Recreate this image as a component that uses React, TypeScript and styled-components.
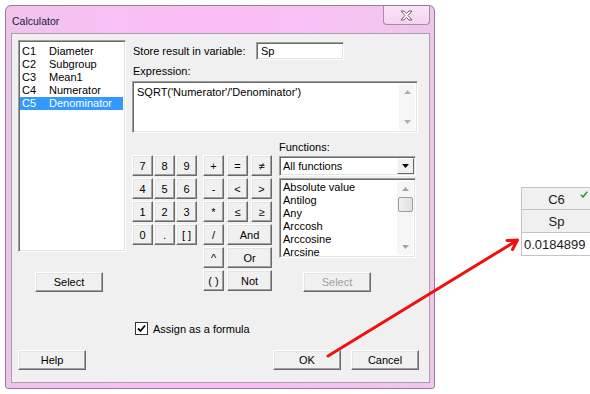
import * as React from 'react';
import styled, { createGlobalStyle } from 'styled-components';

const GlobalStyle = createGlobalStyle`
  html, body {
    margin: 0;
    padding: 0;
    background: #ffffff;
  }
  body {
    width: 590px;
    height: 394px;
    overflow: hidden;
    font-family: "Liberation Sans", Arial, sans-serif;
    font-size: 11px;
    color: #000000;
  }
`;

const Page = styled.div`
  position: relative;
  width: 590px;
  height: 394px;
  display: flex;
  align-items: flex-start;
  overflow: hidden;
`;

const Window = styled.div`
  flex-shrink: 0;
  margin: 5px 0 0 5px;
  width: 430px;
  height: 384px;
  box-sizing: border-box;
  border: 1px solid #8f8090;
  border-radius: 6px 6px 3px 3px;
  background: linear-gradient(90deg, #efc3ec 0%, #f8c0f3 25%, #fbbcf6 50%, #f6c2f2 75%, #efc6ec 100%);
  display: flex;
  flex-direction: column;
  padding: 0 4px 5px 5px;
`;

const TitleBar = styled.div`
  height: 27px;
  display: flex;
  justify-content: space-between;
  align-items: flex-start;
`;

const Title = styled.span`
  margin: 9px 0 0 1px;
  font-size: 10.5px;
  color: #1c1c3c;
`;

const CloseBtn = styled.div`
  width: 47px;
  height: 19px;
  box-sizing: border-box;
  border: 1px solid #a28fa1;
  border-top: none;
  border-radius: 0 0 4px 4px;
  background: linear-gradient(#fbe4f8, #f5d2f1);
  display: flex;
  align-items: center;
  justify-content: center;
`;

const Client = styled.div`
  flex: 1;
  box-sizing: border-box;
  border: 1px solid #a8a0a8;
  background: #f0f0f0;
  padding: 6px 0 0 6px;
  display: flex;
  flex-direction: column;
`;

const TopArea = styled.div`
  display: flex;
`;

const LeftCol = styled.div`
  width: 108px;
  display: flex;
  flex-direction: column;
`;

const Sunken = styled.div`
  box-sizing: border-box;
  background: #ffffff;
  border: 1px solid;
  border-color: #a0a0a0 #ffffff #ffffff #a0a0a0;
  box-shadow: inset 1px 1px 0 #696969, inset -1px -1px 0 #e3e3e3;
`;

const ColumnList = styled(Sunken)`
  height: 212px;
  padding: 4px 2px 0 1px;
`;

const ColumnItem = styled.div<{ $selected?: boolean }>`
  display: grid;
  grid-template-columns: 27px 1fr;
  height: 13px;
  line-height: 13px;
  padding-left: 2px;
  background: ${(p) => (p.$selected ? '#3399ff' : 'transparent')};
  color: ${(p) => (p.$selected ? '#ffffff' : '#000000')};
`;

const Button = styled.button<{ $w?: number; $disabled?: boolean }>`
  width: ${(p) => p.$w ?? 21}px;
  height: 21px;
  box-sizing: border-box;
  padding: 0;
  margin: 0;
  background: #f0f0f0;
  border: 1px solid;
  border-color: #ffffff #696969 #696969 #ffffff;
  box-shadow: inset -1px -1px 0 #a0a0a0, inset 1px 1px 0 #e3e3e3;
  font-family: "Liberation Sans", Arial, sans-serif;
  font-size: 11px;
  color: ${(p) => (p.$disabled ? '#a0a0a0' : '#000000')};
  display: flex;
  align-items: center;
  justify-content: center;
`;

const PushButton = styled(Button)`
  height: 20px;
`;

const LeftSelect = styled(PushButton)`
  margin: 20px 0 0 17px;
`;

const RightCol = styled.div`
  margin-left: 6px;
  width: 286px;
  display: flex;
  flex-direction: column;
`;

const StoreRow = styled.div`
  margin-top: 2px;
  height: 18px;
  display: flex;
  align-items: center;
`;

const Label = styled.span`
  display: block;
  height: 13px;
  line-height: 13px;
  white-space: nowrap;
`;

const StoreLabel = styled(Label)`
  width: 123px;
  margin-left: 1px;
`;

const VarInput = styled(Sunken)`
  width: 88px;
  height: 18px;
  padding: 2px 0 0 4px;
  line-height: 13px;
`;

const ExprLabel = styled(Label)`
  margin: 5px 0 0 1px;
`;

const ExprBox = styled(Sunken)`
  margin-top: 3px;
  height: 52px;
  display: flex;
  justify-content: space-between;
  padding: 2px 2px 2px 4px;
`;

const ExprText = styled.span`
  margin-top: 2px;
  line-height: 13px;
`;

const ScrollBar = styled.div`
  width: 16px;
  background: #f6f6f6;
  display: flex;
  flex-direction: column;
  justify-content: space-between;
  align-items: center;
`;

const ArrowBox = styled.div`
  width: 16px;
  height: 16px;
  display: flex;
  align-items: center;
  justify-content: center;
`;

const Thumb = styled.div`
  margin-top: -28px;
  width: 15px;
  height: 15px;
  box-sizing: border-box;
  background: linear-gradient(90deg, #f2f2f2, #e0e0e0);
  border: 1px solid #9c9c9c;
  border-radius: 2px;
`;

const LowerArea = styled.div`
  margin-top: 8px;
  display: flex;
`;

const Keypad = styled.div`
  margin-top: 14px;
  width: 140px;
  display: flex;
  align-items: flex-start;
`;

const DigitGrid = styled.div`
  display: grid;
  grid-template-columns: repeat(3, 21px);
  grid-auto-rows: 21px;
  column-gap: 1px;
  row-gap: 2px;
`;

const OpGrid = styled.div`
  margin-left: 6px;
  display: grid;
  grid-template-columns: repeat(3, 21px);
  grid-auto-rows: 21px;
  column-gap: 3px;
  row-gap: 2px;
`;

const WideKey = styled(Button)`
  grid-column: span 2;
  width: 45px;
`;

const FunctionsCol = styled.div`
  margin-left: 7px;
  width: 137px;
  display: flex;
  flex-direction: column;
`;

const Combo = styled(Sunken)`
  margin-top: 2px;
  height: 20px;
  display: flex;
  align-items: center;
  justify-content: space-between;
  padding: 0 1px 0 3px;
`;

const ComboButton = styled.div`
  width: 17px;
  height: 16px;
  box-sizing: border-box;
  background: #f0f0f0;
  border: 1px solid;
  border-color: #ffffff #696969 #696969 #ffffff;
  display: flex;
  align-items: center;
  justify-content: center;
`;

const FuncList = styled(Sunken)`
  margin-top: 2px;
  height: 80px;
  display: flex;
  justify-content: space-between;
  padding: 2px 2px 2px 3px;
`;

const FuncItems = styled.div`
  display: flex;
  flex-direction: column;
`;

const FuncItem = styled.span`
  height: 13px;
  line-height: 13px;
  white-space: nowrap;
`;

const RightSelect = styled(PushButton)`
  margin: 14px 0 0 24px;
`;

const FormulaRow = styled.label`
  margin: 30px 0 0 117px;
  display: flex;
  align-items: center;
  gap: 5px;
  height: 13px;
`;

const CheckBox = styled.span`
  width: 13px;
  height: 13px;
  box-sizing: border-box;
  background: #ffffff;
  border: 1px solid #333333;
  display: flex;
  align-items: center;
  justify-content: center;
`;

const ButtonRow = styled.div`
  margin: 15px 10px 0 0;
  display: flex;
  align-items: center;
  gap: 10px;
`;

const Spacer = styled.div`
  flex: 1;
`;

const Sheet = styled.table`
  margin: 187px 0 0 86px;
  border-collapse: collapse;
  font-family: "Liberation Sans", Arial, sans-serif;
  font-size: 13px;
  flex-shrink: 0;
`;

const HeadCell = styled.td<{ $h: number }>`
  position: relative;
  width: 65px;
  height: ${(p) => p.$h}px;
  padding: 1px 0 0;
  border: 1px solid #c4c4c4;
  background: #f0f0f0;
  text-align: center;
  color: #1a1a1a;
`;

const ValueCell = styled.td`
  width: 65px;
  height: 22px;
  padding: 0 2px;
  border: 1px solid #c4c4c4;
  background: #ffffff;
  text-align: left;
  color: #1a1a1a;
`;

const EdgeCell = styled.td<{ $head?: boolean }>`
  width: 10px;
  padding: 0;
  border: 1px solid #c4c4c4;
  background: ${(p) => (p.$head ? '#f0f0f0' : '#ffffff')};
`;

const Tick = styled.svg`
  position: absolute;
  top: 3px;
  right: 3px;
`;

const Overlay = styled.svg`
  position: absolute;
  left: 0;
  top: 0;
  pointer-events: none;
`;

const Up = ({ color = '#a3a3a3' }: { color?: string }) => (
  <svg width="7" height="4" viewBox="0 0 7 4">
    <path d="M0 4 L3.5 0 L7 4 Z" fill={color} />
  </svg>
);

const Down = ({ color = '#a3a3a3' }: { color?: string }) => (
  <svg width="7" height="4" viewBox="0 0 7 4">
    <path d="M0 0 L7 0 L3.5 4 Z" fill={color} />
  </svg>
);

const columns = [
  ['C1', 'Diameter'],
  ['C2', 'Subgroup'],
  ['C3', 'Mean1'],
  ['C4', 'Numerator'],
  ['C5', 'Denominator'],
];

const digits = ['7', '8', '9', '4', '5', '6', '1', '2', '3', '0', '.', '[ ]'];

const functions = ['Absolute value', 'Antilog', 'Any', 'Arccosh', 'Arccosine', 'Arcsine'];

const App: React.FC = () => (
  <Page>
    <GlobalStyle />
    <Window>
      <TitleBar>
        <Title>Calculator</Title>
        <CloseBtn>
          <svg width="13" height="11" viewBox="0 0 13 11">
            <path
              d="M1 1 L4 1 L6.5 3.5 L9 1 L12 1 L8 5.5 L12 10 L9 10 L6.5 7.5 L4 10 L1 10 L5 5.5 Z"
              fill="#ffffff"
              stroke="#6d6370"
              strokeWidth="1"
              strokeLinejoin="round"
            />
          </svg>
        </CloseBtn>
      </TitleBar>
      <Client>
        <TopArea>
          <LeftCol>
            <ColumnList>
              {columns.map(([id, name]) => (
                <ColumnItem key={id} $selected={id === 'C5'}>
                  <span>{id}</span>
                  <span>{name}</span>
                </ColumnItem>
              ))}
            </ColumnList>
            <LeftSelect $w={68}>Select</LeftSelect>
          </LeftCol>
          <RightCol>
            <StoreRow>
              <StoreLabel>Store result in variable:</StoreLabel>
              <VarInput>Sp</VarInput>
            </StoreRow>
            <ExprLabel>Expression:</ExprLabel>
            <ExprBox>
              <ExprText>SQRT('Numerator'/'Denominator')</ExprText>
              <ScrollBar>
                <ArrowBox>
                  <Up color="#b0b0b0" />
                </ArrowBox>
                <ArrowBox>
                  <Down color="#b0b0b0" />
                </ArrowBox>
              </ScrollBar>
            </ExprBox>
            <LowerArea>
              <Keypad>
                <DigitGrid>
                  {digits.map((d) => (
                    <Button key={d}>{d}</Button>
                  ))}
                </DigitGrid>
                <OpGrid>
                  <Button>+</Button>
                  <Button>=</Button>
                  <Button>≠</Button>
                  <Button>-</Button>
                  <Button>&lt;</Button>
                  <Button>&gt;</Button>
                  <Button>*</Button>
                  <Button>≤</Button>
                  <Button>≥</Button>
                  <Button>/</Button>
                  <WideKey>And</WideKey>
                  <Button>^</Button>
                  <WideKey>Or</WideKey>
                  <Button>( )</Button>
                  <WideKey>Not</WideKey>
                </OpGrid>
              </Keypad>
              <FunctionsCol>
                <Label>Functions:</Label>
                <Combo>
                  <span>All functions</span>
                  <ComboButton>
                    <Down color="#000000" />
                  </ComboButton>
                </Combo>
                <FuncList>
                  <FuncItems>
                    {functions.map((f) => (
                      <FuncItem key={f}>{f}</FuncItem>
                    ))}
                  </FuncItems>
                  <ScrollBar>
                    <ArrowBox>
                      <Up />
                    </ArrowBox>
                    <Thumb />
                    <ArrowBox>
                      <Down />
                    </ArrowBox>
                  </ScrollBar>
                </FuncList>
                <RightSelect $w={68} $disabled>
                  Select
                </RightSelect>
              </FunctionsCol>
            </LowerArea>
          </RightCol>
        </TopArea>
        <FormulaRow>
          <CheckBox>
            <svg width="9" height="9" viewBox="0 0 9 9">
              <path d="M1 4.5 L3.5 7 L8 1.5" fill="none" stroke="#000000" strokeWidth="1.8" />
            </svg>
          </CheckBox>
          <span>Assign as a formula</span>
        </FormulaRow>
        <ButtonRow>
          <PushButton $w={68}>Help</PushButton>
          <Spacer />
          <PushButton $w={68}>OK</PushButton>
          <PushButton $w={68}>Cancel</PushButton>
        </ButtonRow>
      </Client>
    </Window>
    <Sheet>
      <tbody>
        <tr>
          <HeadCell $h={20}>
            C6
            <Tick width="8" height="7" viewBox="0 0 8 7">
              <path d="M0.8 3.8 L3 6 L7.2 0.8" fill="none" stroke="#2f9a3a" strokeWidth="1.6" />
            </Tick>
          </HeadCell>
          <EdgeCell $head />
        </tr>
        <tr>
          <HeadCell $h={21}>Sp</HeadCell>
          <EdgeCell $head />
        </tr>
        <tr>
          <ValueCell>0.0184899</ValueCell>
          <EdgeCell />
        </tr>
      </tbody>
    </Sheet>
    <Overlay width="590" height="394" viewBox="0 0 590 394">
      <path
        d="M328 356 L516 241 M507 240.5 L517.5 240 L512.5 249.5"
        fill="none"
        stroke="#f01010"
        strokeWidth="3"
        strokeLinecap="round"
        strokeLinejoin="round"
      />
    </Overlay>
  </Page>
);

export default App;
